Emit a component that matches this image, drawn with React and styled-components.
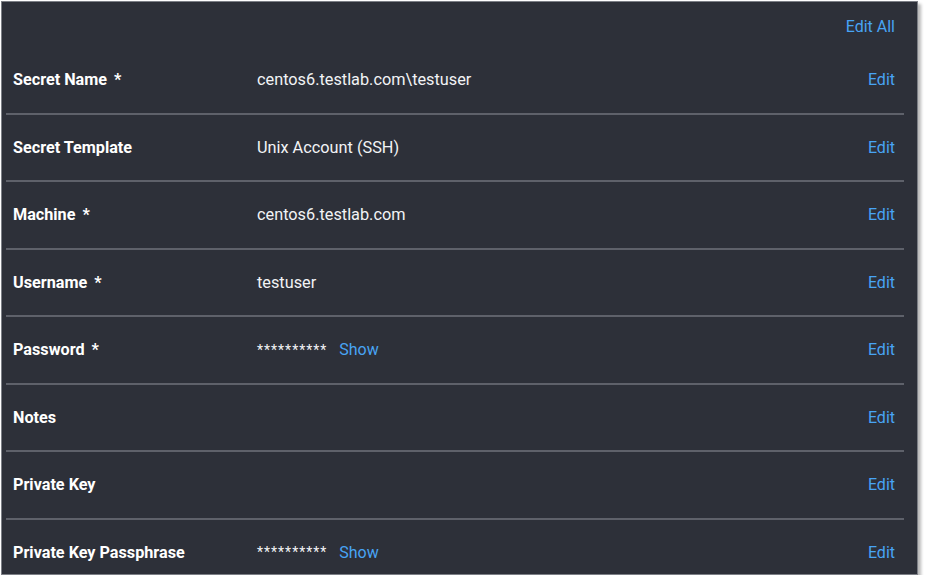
import React from "react";
import styled, { createGlobalStyle } from "styled-components";

const GlobalStyle = createGlobalStyle`
  html, body {
    margin: 0;
    padding: 0;
    background: #ffffff;
  }
  body {
    font-family: Roboto, "Liberation Sans", sans-serif;
  }
`;

const fields = [
  { label: "Secret Name", required: true, value: "centos6.testlab.com\\testuser" },
  { label: "Secret Template", value: "Unix Account (SSH)" },
  { label: "Machine", required: true, value: "centos6.testlab.com" },
  { label: "Username", required: true, value: "testuser" },
  { label: "Password", required: true, masked: true },
  { label: "Notes" },
  { label: "Private Key" },
  { label: "Private Key Passphrase", masked: true, last: true },
];

export default function App() {
  return (
    <>
      <GlobalStyle />
      <Panel>
        <Header>
          <LinkButton>Edit All</LinkButton>
        </Header>
        {fields.map((f) => (
          <Row key={f.label} last={f.last}>
            <Label>
              {f.label}
              {f.required && <Star>*</Star>}
            </Label>
            <Value>
              {f.value}
              {f.masked && (
                <>
                  <Mask>**********</Mask>
                  <LinkButton>Show</LinkButton>
                </>
              )}
            </Value>
            <LinkButton>Edit</LinkButton>
          </Row>
        ))}
      </Panel>
    </>
  );
}

const Panel = styled.div`
  box-sizing: border-box;
  margin: 1px 0 0 1px;
  width: 917px;
  height: 574px;
  background: #2d3039;
  border: 1px solid #7c7f86;
  box-shadow: 3px 3px 3px rgba(0, 0, 0, 0.28);
  padding: 0 13px 0 4px;
  overflow: hidden;
`;

const Header = styled.div`
  box-sizing: border-box;
  height: 45px;
  padding: 4px 9px 0 0;
  display: flex;
  align-items: center;
  justify-content: flex-end;
`;

const Row = styled.div`
  display: flex;
  align-items: center;
  height: 65.5px;
  padding: 0 9px 0 7px;
  border-bottom: ${(p) => (p.last ? "none" : "2px solid #5e616a")};
`;

const Label = styled.div`
  width: 244px;
  flex-shrink: 0;
  color: #ffffff;
  font-size: 16.2px;
  font-weight: 700;
`;

const Star = styled.span`
  margin-left: 7px;
`;

const Value = styled.div`
  flex: 1;
  display: flex;
  align-items: center;
  color: #f2f3f5;
  font-size: 16.3px;
`;

const Mask = styled.span`
  font-size: 14px;
  letter-spacing: 1px;
  margin-right: 12px;
`;

const LinkButton = styled.span`
  color: #48a4f4;
  font-size: 16px;
  cursor: pointer;
`;
